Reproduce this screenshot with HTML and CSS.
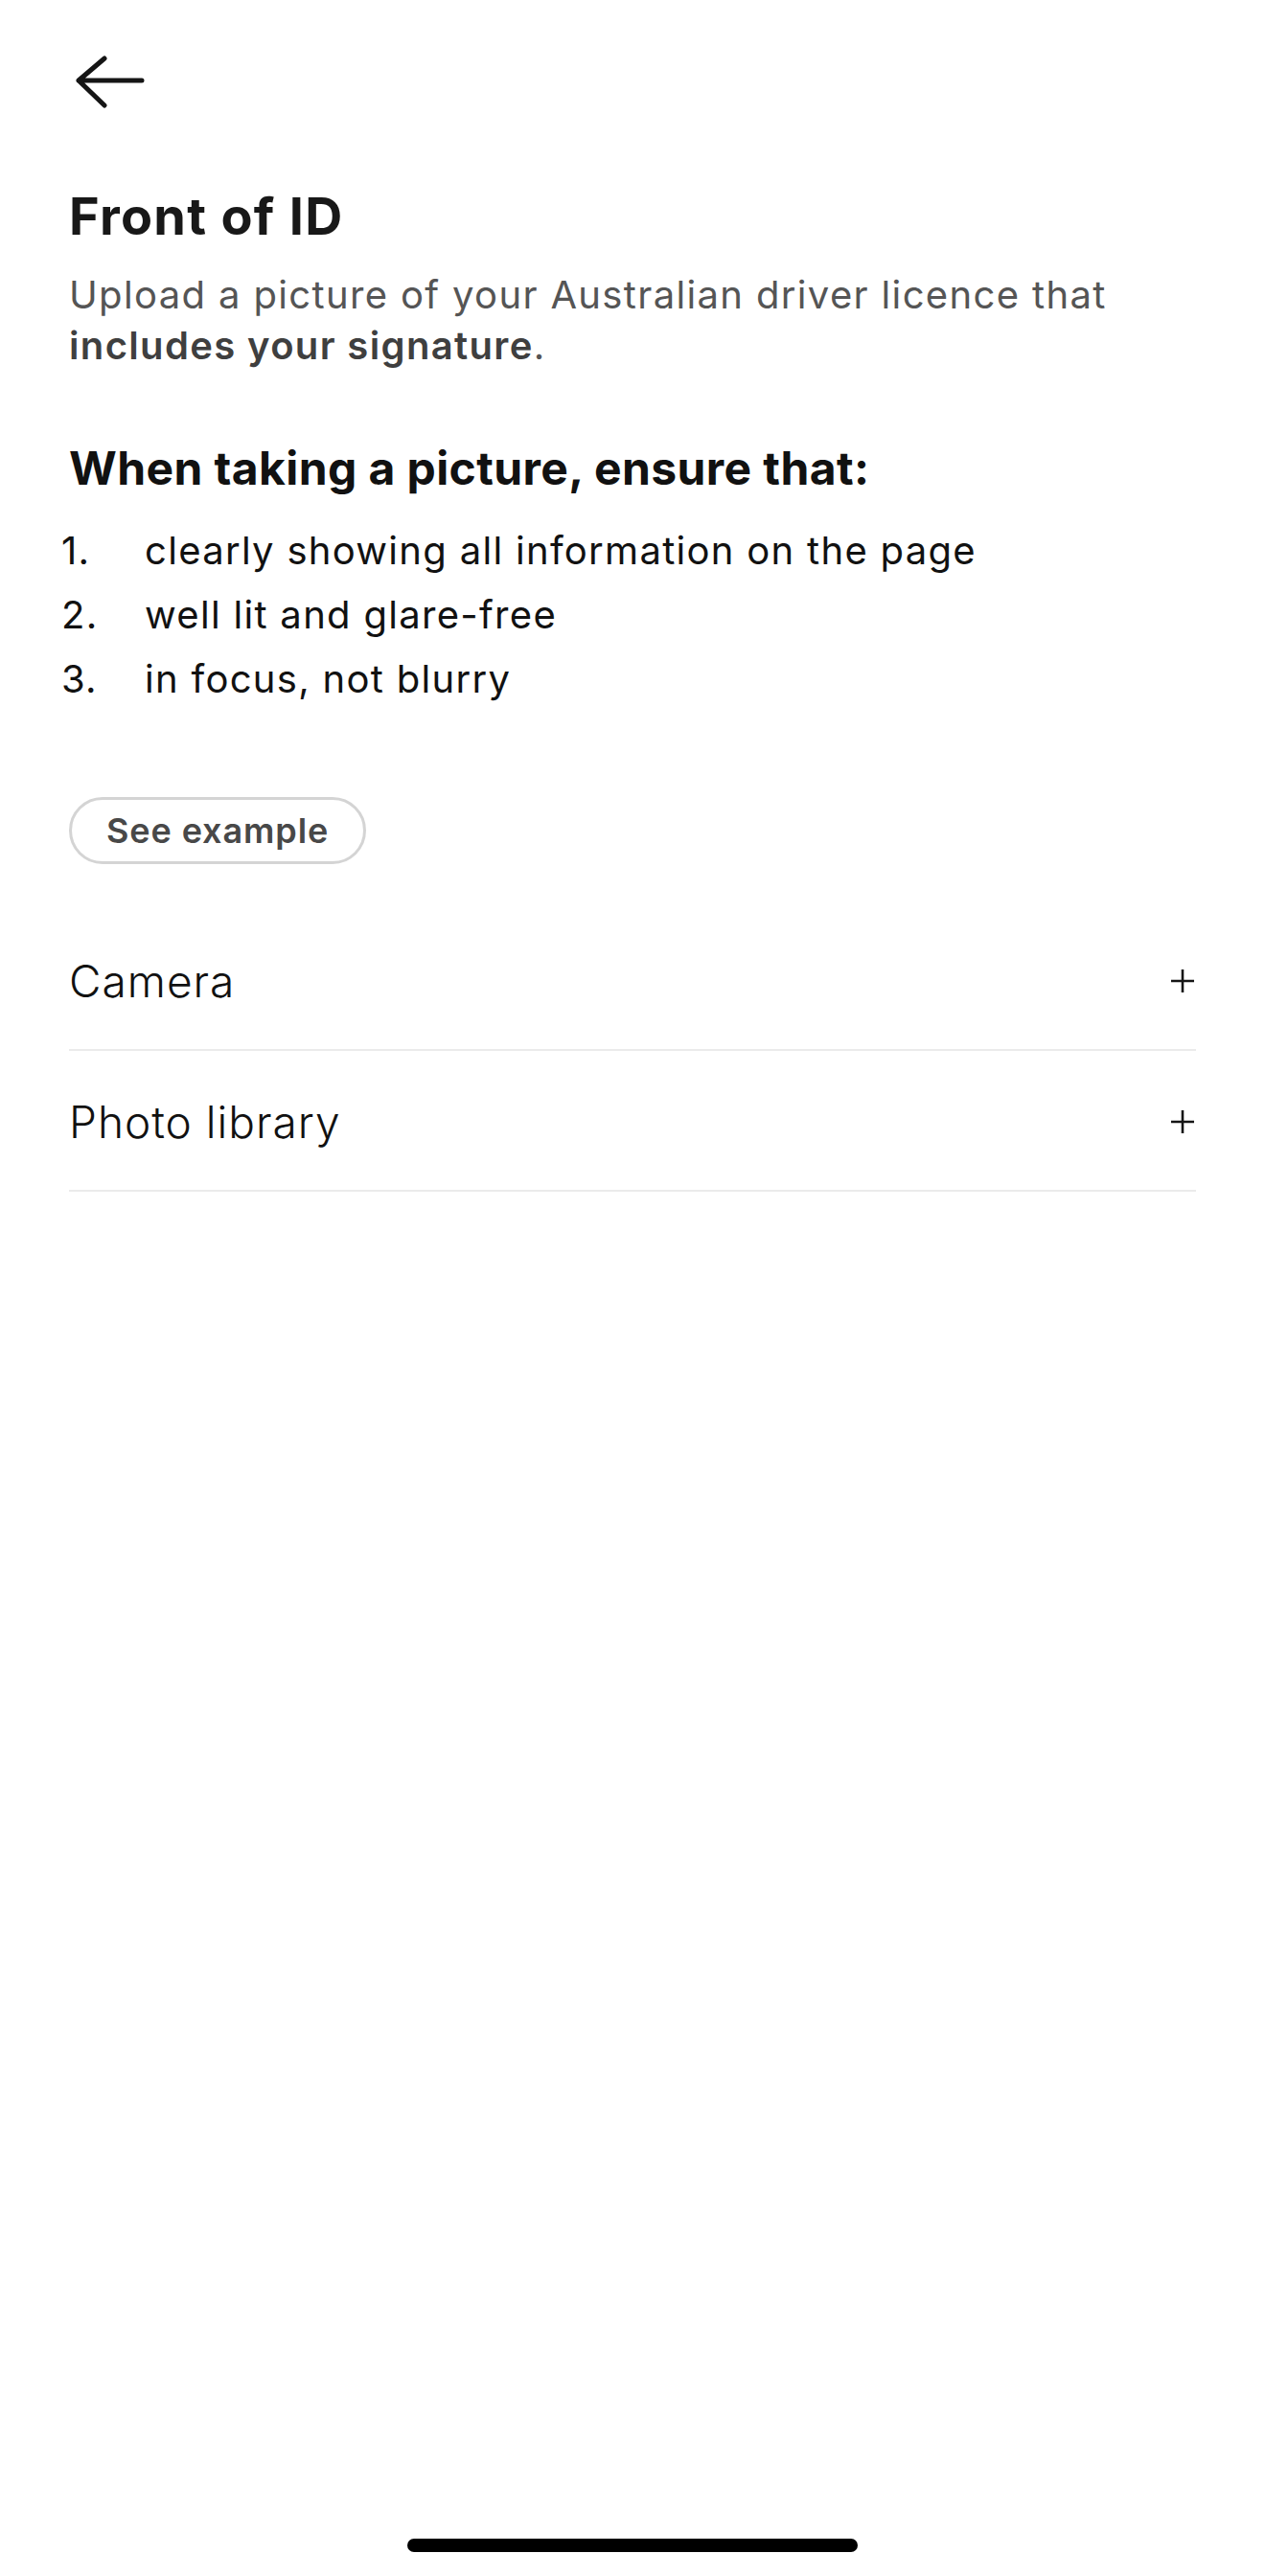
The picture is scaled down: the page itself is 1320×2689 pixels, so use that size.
FILE: index.html
```html
<!DOCTYPE html>
<html lang="en">

<head>
  <meta charset="UTF-8">
  <meta name="viewport" content="width=device-width, initial-scale=1.0">
  <title>Front of ID</title>

  <link rel="stylesheet" href="styles.css">
</head>

<body>
  <div class="screen">
    <header class="top_bar">
      <button class="back" aria-label="Back">
        <svg width="84" height="56" viewBox="0 0 84 56" fill="none">
          <path d="M10 27 H76 M37 4 L10 27 L37 53" stroke="#151515" stroke-width="5" stroke-linecap="round" stroke-linejoin="round" />
        </svg>
      </button>
    </header>

    <main class="content">
      <h1>Front of ID</h1>
      <p class="intro">Upload a picture of your Australian driver licence that <b>includes your signature</b>.</p>

      <h2>When taking a picture, ensure that:</h2>
      <ol class="tips">
        <li><span class="num">1.</span><span>clearly showing all information on the page</span></li>
        <li><span class="num">2.</span><span>well lit and glare-free</span></li>
        <li><span class="num">3.</span><span>in focus, not blurry</span></li>
      </ol>

      <button class="example">See example</button>

      <div class="options">
        <div class="option">
          <span>Camera</span>
          <svg width="28" height="28" viewBox="0 0 28 28">
            <path d="M2 14 H26 M14 2 V26" stroke="#151515" stroke-width="2.6" />
          </svg>
        </div>
        <div class="option">
          <span>Photo library</span>
          <svg width="28" height="28" viewBox="0 0 28 28">
            <path d="M2 14 H26 M14 2 V26" stroke="#151515" stroke-width="2.6" />
          </svg>
        </div>
      </div>
    </main>

    <div class="home_bar"></div>
  </div>
</body>

</html>
```

FILE: styles.css
```css
* {
  box-sizing: border-box;
}

body {
  margin: 0;
  background-color: #ffffff;
  font-family: Inter, "Noto Sans", sans-serif;
  color: #1a1a1a;
}

.screen {
  display: flex;
  flex-direction: column;

  min-height: 100vh;
}

.top_bar {
  padding: 57px 72px 0 72px;
}

.back {
  display: block;

  margin: 0;
  padding: 0;

  border: none;
  background: none;
}

.back svg {
  display: block;
}

.content {
  padding: 0 72px;
}

h1 {
  margin: 81px 0 0 0;

  font-size: 54px;
  line-height: 64px;
  font-weight: 700;
  letter-spacing: 1.3px;
  color: #181818;
}

.intro {
  margin: 23px 0 0 0;

  font-size: 40px;
  line-height: 53px;
  font-weight: 400;
  letter-spacing: 1.35px;
  color: #555555;
}

.intro b {
  font-weight: 600;
  color: #3f3f3f;
}

h2 {
  margin: 72px 0 0 0;

  font-size: 48px;
  line-height: 60px;
  font-weight: 700;
  letter-spacing: 0.4px;
  color: #111111;
}

.tips {
  list-style: none;

  margin: 22px 0 0 -8px;
  padding: 0;
}

.tips li {
  display: grid;
  grid-template-columns: 87px 1fr;

  font-size: 40px;
  line-height: 67px;
  letter-spacing: 1.3px;
  color: #111111;
}

.example {
  display: block;

  margin-top: 90px;
  padding: 0 36px;

  height: 70px;

  border: 3px solid #d4d4d4;
  border-radius: 35px;
  background-color: #ffffff;

  font-family: Inter, "Noto Sans", sans-serif;
  font-size: 36px;
  line-height: 64px;
  font-weight: 600;
  letter-spacing: 0.9px;
  color: #484848;
}

.options {
  margin-top: 48px;
}

.option {
  display: flex;
  justify-content: space-between;
  align-items: center;

  padding: 46px 0 43px 0;

  border-bottom: 2px solid #ebebeb;

  font-size: 46px;
  line-height: 56px;
  font-weight: 300;
  letter-spacing: 1px;
  color: #111111;
}

.option svg {
  display: block;
}

.home_bar {
  align-self: center;

  margin-top: auto;
  margin-bottom: 25px;

  width: 470px;
  height: 14px;

  border-radius: 7px;
  background-color: #000000;
}
```
